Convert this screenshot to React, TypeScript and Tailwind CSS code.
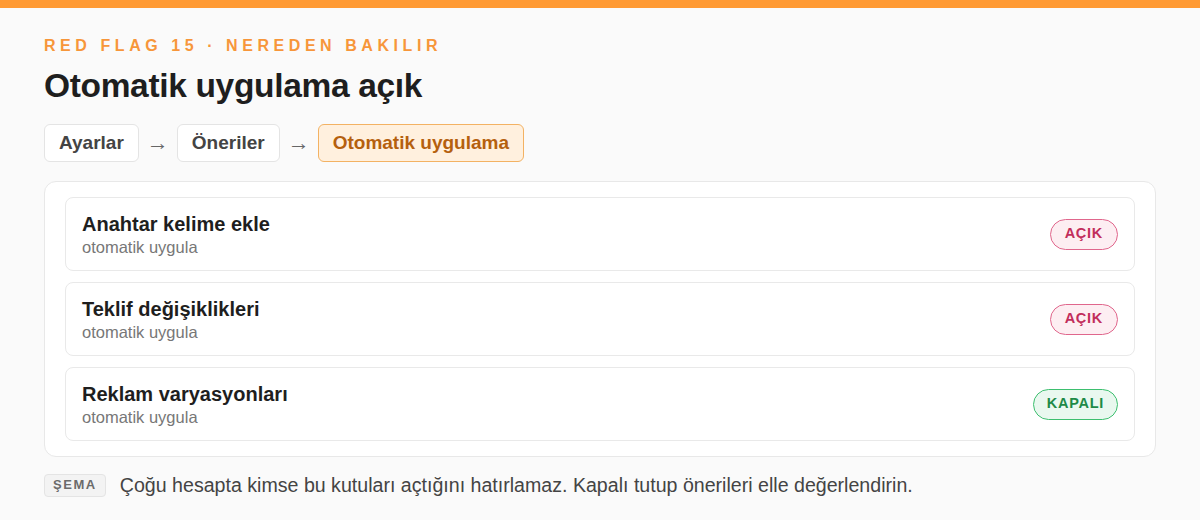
const rows = [
  { title: 'Anahtar kelime ekle', on: true },
  { title: 'Teklif değişiklikleri', on: true },
  { title: 'Reklam varyasyonları', on: false },
];

function Badge({ on }: { on: boolean }) {
  return on ? (
    <span className="rounded-full border-[1.5px] border-[#E0668C] bg-[#FDEEF2] px-[14px] h-[31px] flex items-center text-[14.5px] font-bold tracking-[0.05em] text-[#C22E5C]">
      AÇIK
    </span>
  ) : (
    <span className="rounded-full border-[1.5px] border-[#3DBF6F] bg-[#E9F8EF] px-[13px] h-[31px] flex items-center text-[14.5px] font-bold tracking-[0.05em] text-[#1E8A47]">
      KAPALI
    </span>
  );
}

export default function App() {
  return (
    <div className="w-[1200px] h-[520px] bg-[#FAFAFA] font-['Liberation_Sans',Arial,sans-serif] overflow-hidden">
      <div className="h-[8px] bg-[#FF9A33]" />
      <div className="px-[44px] pt-[28px]">
        <p className="text-[16px] font-bold tracking-[0.285em] text-[#F7963A] leading-[20px]">
          RED FLAG 15 · NEREDEN BAKILIR
        </p>
        <h1 className="mt-[10px] text-[33.5px] font-bold text-[#1E1E1E] leading-[40px] tracking-[-0.01em]">
          Otomatik uygulama açık
        </h1>
        <div className="mt-[18px] flex items-center gap-[8px]">
          <span className="h-[38px] px-[14px] flex items-center rounded-[6px] border border-[#E4E4E4] bg-white text-[19px] font-semibold text-[#444]">
            Ayarlar
          </span>
          <span className="text-[22px] leading-none text-[#666]">→</span>
          <span className="h-[38px] px-[14px] flex items-center rounded-[6px] border border-[#E4E4E4] bg-white text-[19px] font-semibold text-[#444]">
            Öneriler
          </span>
          <span className="text-[22px] leading-none text-[#666]">→</span>
          <span className="h-[38px] px-[14px] flex items-center rounded-[6px] border border-[#F3B263] bg-[#FFF0DE] text-[19px] font-semibold text-[#B5600E]">
            Otomatik uygulama
          </span>
        </div>
        <div className="mt-[19px] rounded-[12px] border border-[#E8E8E8] bg-white px-[20px] py-[15px] flex flex-col gap-[11px]">
          {rows.map((r) => (
            <div
              key={r.title}
              className="h-[74px] rounded-[8px] border border-[#E9E9E9] bg-white px-[16px] flex items-center justify-between"
            >
              <div>
                <p className="text-[20px] font-bold text-[#1E1E1E] leading-[24px]">{r.title}</p>
                <p className="text-[16.5px] text-[#777] leading-[20px] mt-[1px]">otomatik uygula</p>
              </div>
              <Badge on={r.on} />
            </div>
          ))}
        </div>
        <div className="mt-[16px] flex items-center gap-[14px]">
          <span className="h-[23px] px-[8px] flex items-center rounded-[4px] border border-[#E4E4E4] bg-[#F3F3F3] text-[13px] font-bold tracking-[0.12em] text-[#6B6B6B]">
            ŞEMA
          </span>
          <p className="text-[19.6px] leading-[24px] text-[#444]">
            Çoğu hesapta kimse bu kutuları açtığını hatırlamaz. Kapalı tutup önerileri elle değerlendirin.
          </p>
        </div>
      </div>
    </div>
  );
}
